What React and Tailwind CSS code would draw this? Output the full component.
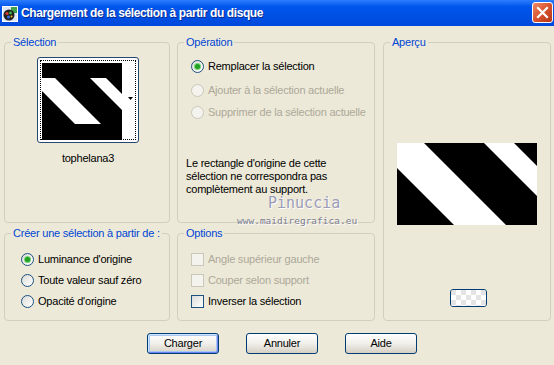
import React from "react";

// XP-style dialog: "Chargement de la sélection à partir du disque"

const Group = ({ title, className = "", children }) => (
  <fieldset className={`border border-[#D0D0BF] rounded-[4px] min-w-0 ${className}`}>
    <legend className="ml-[6px] px-[2px] leading-[13px] whitespace-nowrap text-[#0046D5]">{title}</legend>
    {children}
  </fieldset>
);

const Radio = ({ label, checked, disabled }) => (
  <div className="flex items-center h-[13px] gap-[4px] whitespace-nowrap">
    <span
      className={
        disabled
          ? "w-[13px] h-[13px] shrink-0 rounded-full border border-[#CAC8BB] bg-[#F4F3EE]"
          : "w-[13px] h-[13px] shrink-0 rounded-full border border-[#1C5180] bg-linear-to-br from-[#DCDCD7] to-white flex items-center justify-center"
      }
    >
      {checked && <span className="w-[5px] h-[5px] rounded-full bg-[#21A121] shadow-[0_0_0_1px_#7BD27B]" />}
    </span>
    <span className={disabled ? "text-[#ACA899]" : "text-black"}>{label}</span>
  </div>
);

const Check = ({ label, disabled }) => (
  <div className="flex items-center h-[13px] gap-[4px] whitespace-nowrap">
    <span
      className={
        disabled
          ? "w-[13px] h-[13px] shrink-0 border border-[#CAC8BB] bg-[#F4F3EE]"
          : "w-[13px] h-[13px] shrink-0 border border-[#1C5180] bg-linear-to-br from-[#DCDCD7] to-white"
      }
    />
    <span className={disabled ? "text-[#ACA899]" : "text-black"}>{label}</span>
  </div>
);

const XpButton = ({ label, isDefault }) => (
  <button
    className={`w-[72px] h-[21px] rounded-[3px] border border-[#003C74] bg-linear-to-b from-white via-[#F0EFEA] to-[#D6D0C5] text-black leading-[13px] ${
      isDefault ? "shadow-[inset_1px_1px_0_#CEE7FF,inset_-1px_-1px_0_#6982EE,inset_0_0_0_2px_#A8C6F5]" : ""
    }`}
  >
    {label}
  </button>
);

const AppIcon = () => (
  <svg width="16" height="16" viewBox="0 0 16 16">
    <rect x="0.5" y="0.5" width="15" height="15" fill="#DDE6F4" stroke="#FFFFFF" />
    <rect x="9" y="1" width="6" height="6" fill="#3FA34D" />
    <circle cx="7" cy="9" r="5.5" fill="#202020" />
    <circle cx="5" cy="7.5" r="1.6" fill="#E03B2B" />
    <circle cx="8.5" cy="7" r="1.4" fill="#3BB54A" />
    <circle cx="6.5" cy="11" r="1.5" fill="#2F6FE0" />
    <circle cx="9.5" cy="10.5" r="1" fill="#F2C230" />
  </svg>
);

const ThumbImage = () => (
  <svg width="80" height="77" viewBox="0 0 80 77">
    <rect width="80" height="77" fill="#000" />
    <polygon points="0,15 13,15 59,61 33,61 0,28" fill="#fff" />
    <polygon points="48,15 64,15 80,31 80,47" fill="#fff" />
  </svg>
);

const PreviewImage = () => (
  <svg width="140" height="82" viewBox="0 0 140 82">
    <rect width="140" height="82" fill="#000" />
    <polygon points="0,0 27,0 109,82 57,82 0,25" fill="#fff" />
    <polygon points="87,0 117,0 140,23 140,53" fill="#fff" />
  </svg>
);

const Checker = () => (
  <svg width="35" height="16" viewBox="0 0 35 16">
    <defs>
      <pattern id="chk" width="10" height="10" patternUnits="userSpaceOnUse">
        <rect width="10" height="10" fill="#FFFFFF" />
        <rect width="5" height="5" fill="#E4E4E4" />
        <rect x="5" y="5" width="5" height="5" fill="#E4E4E4" />
      </pattern>
    </defs>
    <rect width="35" height="16" fill="url(#chk)" />
  </svg>
);

export default function App() {
  return (
    <div className="relative w-[554px] h-[365px] overflow-hidden bg-[#ECE9D8] font-['Liberation_Sans',Arial,sans-serif] text-[11px] leading-[13px] tracking-[-0.22px] text-black">
      {/* Title bar */}
      <div className="h-[26px] flex items-center bg-linear-to-b from-[#2C7DFF] via-[#0056EC] via-25% to-[#0049DC]">
        <div className="ml-[2px] mt-[1px]">
          <AppIcon />
        </div>
        <div className="ml-[3px] text-white font-bold text-[12px] leading-[16px] tracking-[-0.4px] [text-shadow:1px_1px_0_#0A2A8C]">
          Chargement de la sélection à partir du disque
        </div>
        <div className="ml-auto mr-[1px] mt-[-2px] w-[21px] h-[21px] rounded-[3px] border border-white bg-linear-to-br from-[#EE8A66] via-[#D8532E] to-[#B53418] flex items-center justify-center">
          <svg width="13" height="13" viewBox="0 0 13 13">
            <path d="M2 2 L11 11 M11 2 L2 11" stroke="#fff" strokeWidth="2.2" strokeLinecap="square" />
          </svg>
        </div>
      </div>

      {/* Group boxes */}
      <div className="flex pl-[4px] pt-[10px]">
        <div className="w-[166px] flex flex-col gap-[4px]">
          <Group title="Sélection" className="h-[187px]">
            <div className="ml-[32px] mt-[8px] w-[102px] h-[86px] rounded-[3px] border border-[#27466F] bg-white p-[2px]">
              <div className="h-full border border-dotted border-black flex p-[1px] pt-[2px]">
                <ThumbImage />
                <div className="flex-1 flex items-start justify-end pt-[34px] pr-[1px]">
                  <svg width="5" height="3" viewBox="0 0 5 3">
                    <polygon points="0,0 5,0 2.5,3" fill="#000" />
                  </svg>
                </div>
              </div>
            </div>
            <div className="mt-[9px] ml-[2px] text-center">tophelana3</div>
          </Group>
          <Group title="Créer une sélection à partir de :" className="h-[94px]">
            <div className="pl-[16px] pt-[13px] flex flex-col gap-[8px]">
              <Radio label="Luminance d'origine" checked />
              <Radio label="Toute valeur sauf zéro" />
              <Radio label="Opacité d'origine" />
            </div>
          </Group>
        </div>

        <div className="ml-[7px] w-[198px] flex flex-col gap-[4px]">
          <Group title="Opération" className="h-[187px]">
            <div className="pl-[13px] pt-[11px] flex flex-col">
              <Radio label="Remplacer la sélection" checked />
              <div className="mt-[11px]">
                <Radio label="Ajouter à la sélection actuelle" disabled />
              </div>
              <div className="mt-[9px]">
                <Radio label="Supprimer de la sélection actuelle" disabled />
              </div>
            </div>
            <p className="pl-[8px] mt-[38px]">
              Le rectangle d'origine de cette
              <br />
              sélection ne correspondra pas
              <br />
              complètement au support.
            </p>
          </Group>
          <Group title="Options" className="h-[94px]">
            <div className="pl-[13px] pt-[13px] flex flex-col gap-[8px]">
              <Check label="Angle supérieur gauche" disabled />
              <Check label="Couper selon support" disabled />
              <Check label="Inverser la sélection" />
            </div>
          </Group>
        </div>

        <div className="ml-[8px] w-[168px]">
          <Group title="Aperçu" className="h-[285px]">
            <div className="mt-[94px] flex justify-center">
              <PreviewImage />
            </div>
            <div className="mt-[64px] flex justify-center">
              <div className="ml-[2px] w-[37px] h-[18px] rounded-[3px] border border-[#003C74] overflow-hidden flex">
                <Checker />
              </div>
            </div>
          </Group>
        </div>
      </div>

      {/* Buttons */}
      <div className="mt-[12px] pl-[147px] flex gap-[27px]">
        <XpButton label="Charger" isDefault />
        <XpButton label="Annuler" />
        <XpButton label="Aide" />
      </div>

      {/* Watermark */}
      <div className="absolute left-[268px] top-[195px] font-['DejaVu_Sans_Mono',monospace] text-[15px] leading-[17px] tracking-normal text-[#9C9CB8] [text-shadow:1px_1px_0_#FFFFFF]">
        Pinuccia
      </div>
      <div className="absolute left-[237px] top-[215px] font-['DejaVu_Sans_Mono',monospace] text-[9.5px] leading-[12px] tracking-normal text-[#7C7C8E] [text-shadow:1px_1px_0_#FFFFFF]">
        www.maidiregrafica.eu
      </div>
    </div>
  );
}
